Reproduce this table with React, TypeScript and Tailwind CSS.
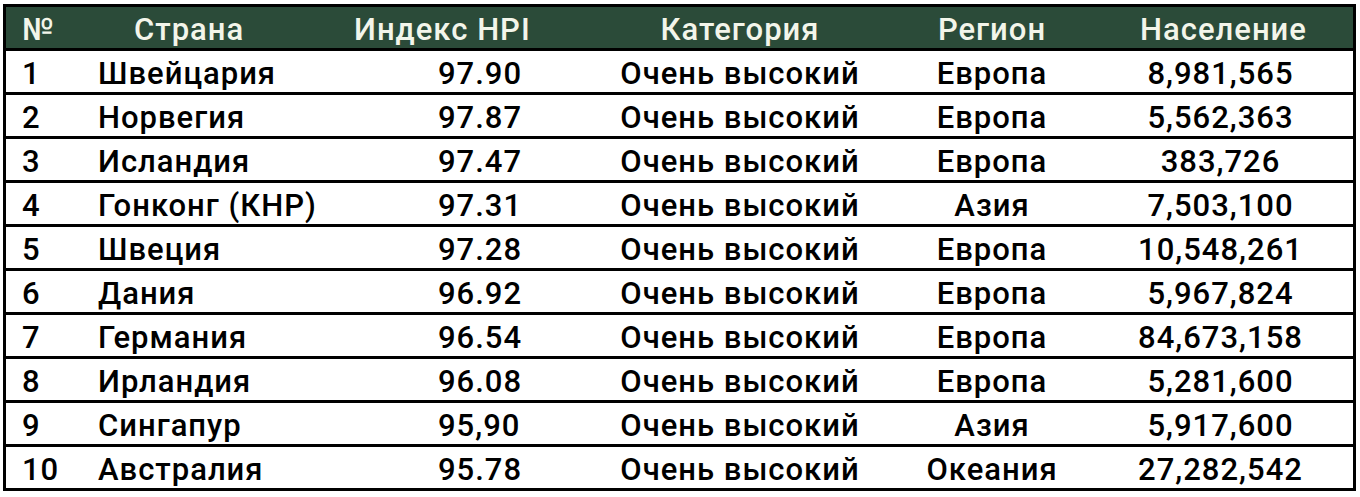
import React from "react";

type Row = [string, string, string, string, string, string];

const rows: Row[] = [
  ["1", "Швейцария", "97.90", "Очень высокий", "Европа", "8,981,565"],
  ["2", "Норвегия", "97.87", "Очень высокий", "Европа", "5,562,363"],
  ["3", "Исландия", "97.47", "Очень высокий", "Европа", "383,726"],
  ["4", "Гонконг (КНР)", "97.31", "Очень высокий", "Азия", "7,503,100"],
  ["5", "Швеция", "97.28", "Очень высокий", "Европа", "10,548,261"],
  ["6", "Дания", "96.92", "Очень высокий", "Европа", "5,967,824"],
  ["7", "Германия", "96.54", "Очень высокий", "Европа", "84,673,158"],
  ["8", "Ирландия", "96.08", "Очень высокий", "Европа", "5,281,600"],
  ["9", "Сингапур", "95,90", "Очень высокий", "Азия", "5,917,600"],
  ["10", "Австралия", "95.78", "Очень высокий", "Океания", "27,282,542"],
];

const grid = "grid grid-cols-[86px_258px_210px_360px_144px_289px] items-center box-border pt-[3px]";

const App: React.FC = () => (
  <div className="bg-white w-[1360px] h-[497px] pt-[4px] pl-[3px]">
    <div
      className="w-[1353px] border-[3px] border-black text-[31px] font-medium tracking-[1px] leading-none"
      style={{ fontFamily: "Roboto, 'Noto Sans', sans-serif" }}
    >
      <div className={`${grid} h-[41px] bg-[#2b4b39] text-[#f3f5ea]`}>
        <div className="pl-[16px]">№</div>
        <div className="pl-[42px]">Страна</div>
        <div className="pl-[4px]">Индекс HPI</div>
        <div className="text-center">Категория</div>
        <div className="text-center">Регион</div>
        <div className="text-center pl-[30px]">Население</div>
      </div>
      {rows.map((r) => (
        <div key={r[0]} className={`${grid} h-[44px] border-t-[3px] border-black text-black`}>
          <div className="pl-[16px]">{r[0]}</div>
          <div className="pl-[6px]">{r[1]}</div>
          <div className="pl-[88px]">{r[2]}</div>
          <div className="text-center">{r[3]}</div>
          <div className="text-center">{r[4]}</div>
          <div className="text-center pl-[24px]">{r[5]}</div>
        </div>
      ))}
    </div>
  </div>
);

export default App;
